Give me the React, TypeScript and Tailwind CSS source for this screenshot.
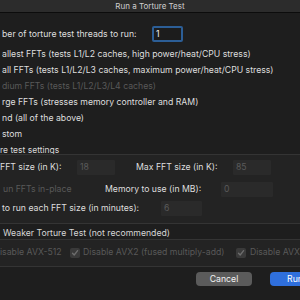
export default function App() {
  const font = { fontFamily: 'Inter, "Noto Sans", "Liberation Sans", sans-serif' };
  return (
    <div
      className="w-[300px] h-[300px] overflow-hidden bg-[#1e1e1e] text-[#dedede] text-[8.7px] leading-none whitespace-nowrap flex flex-col"
      style={font}
    >
      <div className="h-[13px] shrink-0 bg-[#2c2c2c] border-b border-[#0c0c0c] flex items-center justify-center text-[8px] text-[#cfcfcf]">
        Run a Torture Test
      </div>

      <div className="mt-[13px] h-[16px] shrink-0 flex items-center pl-[2px]">
        <span className="w-[150px]">ber of torture test threads to run:</span>
        <div className="w-[31px] h-[16px] border-2 border-[#2c5e96] rounded-[2px] bg-[#1c1c1c] flex items-center pl-[2px] text-[#f0f0f0]">
          1
        </div>
      </div>

      <div className="mt-[4px] flex flex-col shrink-0 pl-[2px]">
        <div className="h-[16px] flex items-center">allest FFTs (tests L1/L2 caches, high power/heat/CPU stress)</div>
        <div className="h-[16px] flex items-center">all FFTs (tests L1/L2/L3 caches, maximum power/heat/CPU stress)</div>
        <div className="h-[16px] flex items-center text-[#595959]">dium FFTs (tests L1/L2/L3/L4 caches)</div>
        <div className="h-[16px] flex items-center">rge FFTs (stresses memory controller and RAM)</div>
        <div className="h-[16px] flex items-center">nd (all of the above)</div>
        <div className="h-[16px] flex items-center">stom</div>
      </div>

      <div className="h-[12px] shrink-0 pt-[4px] flex items-center text-[8.5px] text-[#d6d6d6]">re test settings</div>

      <div className="h-[70px] shrink-0 border-y border-[#343434] bg-[#232323] flex flex-col">
        <div className="mt-[5px] h-[15px] flex items-center">
          <span className="w-[77px]">FFT size (in K):</span>
          <div className="w-[38px] h-[15px] bg-[#2a2a2a] rounded-[1px] flex items-center pl-[3px] text-[#5a5a5a]">18</div>
          <span className="ml-[21px] w-[97px]">Max FFT size (in K):</span>
          <div className="w-[38px] h-[15px] bg-[#2a2a2a] rounded-[1px] flex items-center pl-[3px] text-[#5a5a5a]">85</div>
        </div>
        <div className="mt-[7px] h-[15px] flex items-center">
          <span className="pl-[3px] w-[105px] text-[#595959]">un FFTs in-place</span>
          <span className="w-[116px]">Memory to use (in MB):</span>
          <div className="w-[52px] h-[15px] bg-[#2a2a2a] rounded-[1px] flex items-center pl-[3px] text-[#5a5a5a]">0</div>
        </div>
        <div className="mt-[4px] h-[15px] flex items-center">
          <span className="pl-[2px] w-[161px]">to run each FFT size (in minutes):</span>
          <div className="w-[41px] h-[15px] bg-[#2a2a2a] rounded-[1px] flex items-center pl-[3px] text-[#5a5a5a]">6</div>
        </div>
      </div>

      <div className="h-[15px] shrink-0 pt-[4px] pl-[3px] flex items-center text-[8.7px] text-[#d6d6d6]">
        Weaker Torture Test (not recommended)
      </div>

      <div className="h-[28px] shrink-0 border-y border-[#343434] bg-[#232323] flex items-center pb-[1px] text-[#595959]">
        <span className="w-[72px]">isable AVX-512</span>
        <Check />
        <span className="ml-[3px] w-[157px]">Disable AVX2 (fused multiply-add)</span>
        <Check />
        <span className="ml-[4px]">Disable AVX</span>
      </div>

      <div className="mt-[5px] h-[14px] shrink-0 flex pl-[196px] gap-[18px]">
        <div className="w-[56px] h-[14px] shrink-0 rounded-[4px] bg-[#5b5b5b] flex items-center justify-center text-[#f2f2f2]">
          Cancel
        </div>
        <div className="w-[50px] h-[14px] shrink-0 rounded-[4px] bg-[#2f6fdc] flex items-center justify-center text-white">
          Run
        </div>
      </div>
    </div>
  );
}

function Check() {
  return (
    <div className="w-[10px] h-[10px] shrink-0 rounded-[2px] bg-[#3a3a3a] flex items-center justify-center">
      <svg width="8" height="8" viewBox="0 0 8 8">
        <path d="M1.5 4.2 L3.2 6 L6.6 1.6" fill="none" stroke="#6e6e6e" strokeWidth="1.3" strokeLinecap="round" strokeLinejoin="round" />
      </svg>
    </div>
  );
}
